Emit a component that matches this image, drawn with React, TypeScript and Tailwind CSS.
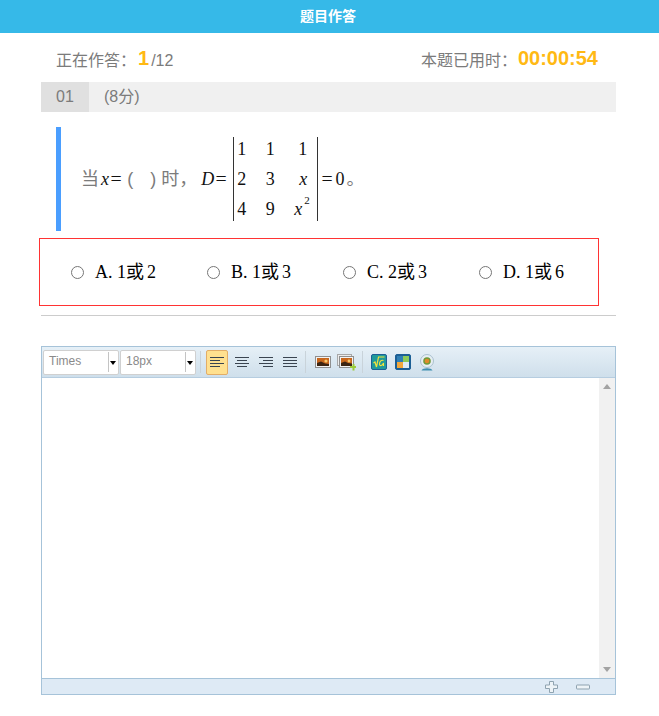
import React from "react";

const cjk = `"Liberation Sans", "Noto Sans CJK SC", sans-serif`;
const serif = `"Liberation Serif", "Noto Sans CJK SC", serif`;

function Lines({ mode }: { mode: "left" | "center" | "right" | "justify" }) {
  const rows =
    mode === "left"
      ? ["M1 2.5h14", "M1 5.5h10", "M1 8.5h14", "M1 11.5h10"]
      : mode === "center"
        ? ["M1 2.5h14", "M3 5.5h10", "M1 8.5h14", "M3 11.5h10"]
        : mode === "right"
          ? ["M1 2.5h14", "M5 5.5h10", "M1 8.5h14", "M5 11.5h10"]
          : ["M1 2.5h14", "M1 5.5h14", "M1 8.5h14", "M1 11.5h14"];
  return (
    <svg width="16" height="14" viewBox="0 0 16 14" fill="none" stroke="#3a4450" strokeWidth="1">
      {rows.map((d) => (
        <path key={d} d={d} />
      ))}
    </svg>
  );
}

function Photo() {
  return (
    <svg width="16" height="12" viewBox="0 0 16 12">
      <rect x="0.5" y="0.5" width="15" height="11" fill="#f2f2f2" stroke="#8f8f8f" />
      <rect x="2" y="2" width="12" height="8" fill="#c8661c" />
      <circle cx="11" cy="5" r="1.6" fill="#f7c86a" />
      <path d="M2 7l4-1.5 4 2 4 .5V10H2z" fill="#3b2412" />
    </svg>
  );
}

function PhotoPlus() {
  return (
    <svg width="19" height="17" viewBox="0 0 19 17">
      <rect x="0.5" y="0.5" width="14" height="11" fill="#ececec" stroke="#a8a8a8" />
      <rect x="2.5" y="2.5" width="14" height="11" fill="#f2f2f2" stroke="#8f8f8f" />
      <rect x="4" y="4" width="11" height="8" fill="#c8661c" />
      <circle cx="12" cy="7" r="1.4" fill="#f7c86a" />
      <path d="M4 9l4-1.5 3 1.5 4 .5V12H4z" fill="#3b2412" />
      <path d="M13 12h2.5v-2h2v2H19v2h-1.5v2.5h-2V14H13z" fill="#9ccb3b" />
    </svg>
  );
}

function Select({ label }: { label: string }) {
  return (
    <div className="relative w-[76px] h-[25px] bg-white border border-[#d0d0d0] rounded-[2px] flex items-center pl-[5px] pb-[2px] text-[12px] text-[#8a8a8a]">
      {label}
      <div className="absolute right-[9px] top-[1px] w-px h-[20px] bg-[#c4c4c4]" />
      <div className="absolute right-[2px] top-[10px] w-0 h-0 border-x-[3px] border-x-transparent border-t-[4px] border-t-black" />
    </div>
  );
}

function Tool({ children }: { children: React.ReactNode }) {
  return <div className="w-[24px] h-[25px] flex items-center justify-center">{children}</div>;
}

function Option({ k, a, b }: { k: string; a: string; b: string }) {
  return (
    <label className="w-[136px] shrink-0 flex items-center text-[18px] text-black" style={{ fontFamily: serif }}>
      <input type="radio" name="answer" className="m-0 w-[13px] h-[13px] mr-[11px]" />
      <span>
        {k}. {a}
        <span>或</span>
        <span className="ml-[3px]">{b}</span>
      </span>
    </label>
  );
}

function Matrix() {
  const cells: [React.ReactNode, string][] = [
    ["1", "text-left"],
    ["1", "text-center"],
    ["1", "text-right"],
    ["2", "text-left"],
    ["3", "text-center"],
    [<i key="x">x</i>, "text-right"],
    ["4", "text-left"],
    ["9", "text-center"],
    [
      <i key="x2" className="relative mr-[5px]">
        x
        <span className="absolute left-[10px] -top-[7px] not-italic text-[11px] leading-[16px]">2</span>
      </i>,
      "text-right",
    ],
  ];
  return (
    <div className="w-[85px] h-[84px] ml-[7px] mr-[4px] border-x border-[#333] grid grid-cols-[21px_24px_25px] grid-rows-[30px_30px_30px] content-center items-center pl-[3px] pr-[9px] text-[18px] leading-[28px] text-[#111]">
      {cells.map(([c, cls], i) => (
        <div key={i} className={cls}>
          {c}
        </div>
      ))}
    </div>
  );
}

export default function App() {
  return (
    <div className="w-[659px] h-[716px] bg-white" style={{ fontFamily: cjk }}>
      <header className="h-[33px] bg-[#36b9e8] flex items-center justify-center pr-[3px] text-white text-[14px] font-bold">
        题目作答
      </header>

      <main className="w-[575px] ml-[41px]">
        <div className="h-[49px] flex items-center justify-between pt-[3px] pl-[15px] pr-[18px] text-[16px] text-[#7b7b7b]">
          <div className="flex items-baseline">
            <span>正在作答：</span>
            <span className="text-[20px] font-bold text-[#ffb914] ml-[2px] mr-[2px] -translate-y-px">1</span>
            <span>/12</span>
          </div>
          <div className="flex items-baseline">
            <span>本题已用时：</span>
            <span className="text-[20px] font-bold text-[#ffb914] ml-px -translate-y-px">00:00:54</span>
          </div>
        </div>

        <div className="h-[30px] bg-[#f0f0f0] flex items-center pb-px text-[16px] text-[#7b7b7b]">
          <div className="w-[48px] h-[30px] -mb-px bg-[#e0e0e0] flex items-center justify-center pb-px">01</div>
          <div className="ml-[15px]">(8分)</div>
        </div>

        <div className="mt-[15px] ml-[15px] h-[104px] border-l-[5px] border-[#4a9eff] pl-[20px] flex items-center text-[18px] text-[#7b7b7b]">
          <span>当</span>
          <span className="ml-[2px] text-[#111]" style={{ fontFamily: serif }}>
            <i>x</i>
            <span className="mx-[2px] inline-block scale-x-110">=</span>
          </span>
          <span className="ml-[4px]">(</span>
          <span className="ml-[17px]">)</span>
          <span className="ml-[5px]">时，</span>
          <span className="ml-[4px] flex items-center text-[#111]" style={{ fontFamily: serif }}>
            <i>D</i>
            <span className="ml-[2px] inline-block scale-x-110">=</span>
            <Matrix />
            <span className="inline-block scale-x-110">=</span>
            <span className="ml-[3px]">0</span>
            <span className="ml-[2px] text-[#7b7b7b]" style={{ fontFamily: cjk }}>。</span>
          </span>
        </div>

        <div className="mt-[7px] -ml-[2px] w-[560px] h-[68px] border border-[#f33] pl-[31px] flex items-center">
          <Option k="A" a="1" b="2" />
          <Option k="B" a="1" b="3" />
          <Option k="C" a="2" b="3" />
          <Option k="D" a="1" b="6" />
        </div>

        <div className="mt-[9px] h-px bg-[#ccc]" />

        <div className="mt-[30px] h-[349px] border border-[#a6c3d9] flex flex-col">
          <div className="h-[31px] shrink-0 border-b border-[#b6cde0] bg-gradient-to-b from-[#e6f0f7] to-[#cfdfeb] flex items-center pl-px">
            <Select label="Times" />
            <div className="w-px" />
            <Select label="18px" />
            <div className="w-px h-[22px] bg-[#c9d3da] ml-[4px] mr-[5px]" />
            <div className="w-[22px] h-[25px] mr-[2px] flex items-center justify-center rounded-[2px] bg-[#ffe08f] border border-[#e2ad68]">
              <Lines mode="left" />
            </div>
            <Tool>
              <Lines mode="center" />
            </Tool>
            <Tool>
              <Lines mode="right" />
            </Tool>
            <Tool>
              <Lines mode="justify" />
            </Tool>
            <div className="w-px h-[22px] bg-[#c9d3da] ml-[3px] mr-[5px]" />
            <Tool>
              <Photo />
            </Tool>
            <div className="w-[22px] h-[25px] flex items-center justify-center">
              <PhotoPlus />
            </div>
            <div className="w-px h-[22px] bg-[#c9d3da] ml-[5px] mr-[4px]" />
            <Tool>
              <svg width="16" height="16" viewBox="0 0 16 16">
                <rect x="0.5" y="0.5" width="15" height="15" rx="1.5" fill="#1f9a9a" stroke="#1c5f95" />
                <path d="M2.5 9l1.5-1 1.5 5 2-10h6" fill="none" stroke="#f6e43a" strokeWidth="1.2" />
                <path d="M12.5 6.5c-2-1-4 1-4 3.5s3 2 4-1v3" fill="none" stroke="#f6e43a" strokeWidth="1.1" />
              </svg>
            </Tool>
            <Tool>
              <svg width="16" height="16" viewBox="0 0 16 16">
                <rect x="0.5" y="0.5" width="15" height="15" rx="1.5" fill="#1c5f95" stroke="#1c5f95" />
                <rect x="2" y="2" width="6" height="6" fill="#2f7fb5" />
                <rect x="8" y="2" width="6" height="6" fill="#8ccb5a" />
                <rect x="2" y="8" width="6" height="6" fill="#f2a83c" />
                <rect x="8" y="8" width="6" height="6" fill="#dcecf7" />
              </svg>
            </Tool>
            <Tool>
              <svg width="16" height="17" viewBox="0 0 16 17">
                <circle cx="8" cy="7" r="6.5" fill="#e6eef3" stroke="#a9c1cf" />
                <circle cx="8" cy="7" r="3.8" fill="#6f9a3a" />
                <circle cx="8" cy="7" r="2.3" fill="#e08a2a" />
                <path d="M2.5 16.5c1-3 10-3 11 0z" fill="#3f8fb0" />
              </svg>
            </Tool>
          </div>

          <div className="flex-1 flex min-h-0">
            <div className="flex-1 bg-white" />
            <div className="w-[16px] bg-[#f1f1f1] flex flex-col items-center justify-between py-[6px]">
              <div className="w-0 h-0 border-x-[4px] border-x-transparent border-b-[5px] border-b-[#a3a3a3]" />
              <div className="w-0 h-0 border-x-[4px] border-x-transparent border-t-[5px] border-t-[#a3a3a3]" />
            </div>
          </div>

          <div className="h-[16px] shrink-0 border-t border-[#a6c3d9] bg-[#deeaf5] flex items-center justify-end pr-[25px] gap-[17px]">
            <svg width="14" height="14" viewBox="0 0 14 14" fill="#edf3f7" stroke="#8fa3b0">
              <path d="M4.5 1.5h4v3.5h4v3.5h-4v4h-4v-4h-4V5h4z" />
            </svg>
            <svg width="14" height="6" viewBox="0 0 14 6" fill="#edf3f7" stroke="#8fa3b0">
              <rect x="0.5" y="1" width="13" height="4" rx="0.5" />
            </svg>
          </div>
        </div>
      </main>
    </div>
  );
}
